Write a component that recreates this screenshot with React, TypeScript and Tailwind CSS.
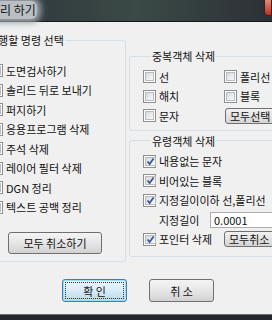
import React from "react";

const font = { fontFamily: '"Noto Sans CJK KR", "Noto Sans", sans-serif' };

const Check = ({ checked }: { checked?: boolean }) => {
    return (
        <span className="w-[13px] h-[13px] shrink-0 border border-[#8e8f8f] bg-white p-[1px] flex">
            <span className="flex-1 flex items-center justify-center border border-[#b8bcc1] bg-gradient-to-br from-[#d6d9dc] to-[#fbfbfb]">
                {checked && (
                    <svg width="9" height="9" viewBox="0 0 9 9">
                        <path d="M1.5 4.5 L3.6 7 L7.6 1.5" fill="none" stroke="#3b5795" strokeWidth="1.8" />
                    </svg>
                )}
            </span>
        </span>
    )
}

interface RowProp {
    label: string,
    checked?: boolean
}

const Row: React.FC<RowProp> = ({ label, checked }) => {
    return (
        <div className="h-[19.5px] flex items-center gap-[3px] whitespace-nowrap">
            <Check checked={checked} />
            <span className="leading-[14px]">{label}</span>
        </div>
    )
}

const SmallButton = ({ label, className }: { label: string, className: string }) => {
    return (
        <div className={"h-[16px] border border-[#707070] rounded-[3px] bg-gradient-to-b from-[#f2f2f2] to-[#d4d4d4] flex items-center pl-[4px] leading-[14px] whitespace-nowrap shrink-0 " + className}>
            {label}
        </div>
    )
}

export default function App() {
    return (
        <div className="w-[272px] h-[320px] overflow-hidden flex flex-col bg-[#f0f0f0] text-[11px] text-[#111]" style={font}>
            {/* title bar */}
            <div className="h-[22px] shrink-0 flex bg-gradient-to-r from-[#2f363c] via-[#3b4a46] to-[#2c3036] border-b border-[#15181b]">
                <div className="h-[18px] mt-[1px] ml-[-12px] px-[1px] rounded-[6px] bg-[#b9bfc4] shadow-[0_0_6px_4px_#9ea5ab] text-[12px] leading-[18px] text-[#151515] whitespace-nowrap">
                    정리 하기
                </div>
                <div className="flex-1" />
                <div className="w-[8px] h-[17px] mt-[-1px] rounded-bl-[4px] border border-[#4a1a14] bg-gradient-to-b from-[#e08a78] to-[#b6321f]" />
            </div>

            <div className="flex-1 flex flex-col">
                <div className="flex items-start">
                    <fieldset className="ml-[-16px] mt-[11px] w-[142px] shrink-0 border border-[#d5dfe5] rounded-[3px] pl-[5px] pt-[14px] pb-[7px]">
                        <legend className="ml-[-3px] px-[1px] leading-[14px] whitespace-nowrap">실행할 명령 선택</legend>
                        <Row label="도면검사하기" />
                        <Row label="솔리드 뒤로 보내기" />
                        <Row label="퍼지하기" />
                        <Row label="응용프로그램 삭제" />
                        <Row label="주석 삭제" />
                        <Row label="레이어 필터 삭제" />
                        <Row label="DGN 정리" />
                        <Row label="텍스트 공백 정리" />
                        <div className="ml-[18px] mt-[15px] w-[94px] h-[22px] border border-[#707070] rounded-[3px] bg-gradient-to-b from-[#f4f4f4] via-[#e6e6e6] to-[#d2d2d2] flex items-center justify-center leading-[14px]">
                            모두 취소하기
                        </div>
                    </fieldset>

                    <div className="ml-[3px] flex flex-col w-[170px] shrink-0">
                        <fieldset className="mt-[27px] border border-[#d5dfe5] rounded-[3px] pl-[13px] pt-[4px] pb-[4px]">
                            <legend className="ml-[8px] px-[1px] leading-[14px] whitespace-nowrap">중복객체 삭제</legend>
                            <div className="grid grid-cols-[81px_1fr]">
                                <Row label="선" />
                                <Row label="폴리선" />
                                <Row label="해치" />
                                <Row label="블록" />
                                <Row label="문자" />
                                <div className="h-[19.5px] flex items-center">
                                    <SmallButton label="모두선택" className="ml-[1px] w-[70px]" />
                                </div>
                            </div>
                        </fieldset>

                        <fieldset className="mt-[3px] border border-[#d5dfe5] rounded-[3px] pl-[13px] pt-[4px] pb-[7px]">
                            <legend className="ml-[8px] px-[1px] leading-[14px] whitespace-nowrap">유령객체 삭제</legend>
                            <Row label="내용없는 문자" checked />
                            <Row label="비어있는 블록" checked />
                            <Row label="지정길이이하 선,폴리선" checked />
                            <div className="h-[19.5px] flex items-center whitespace-nowrap">
                                <span className="ml-[16px] w-[51px] leading-[14px]">지정길이</span>
                                <div className="h-[16px] flex-1 bg-white border border-[#abadb3] flex items-center pl-[3px] leading-[14px]">
                                    0.0001
                                </div>
                            </div>
                            <div className="grid grid-cols-[81px_1fr]">
                                <Row label="포인터 삭제" checked />
                                <div className="h-[19.5px] flex items-center">
                                    <SmallButton label="모두취소" className="w-[70px]" />
                                </div>
                            </div>
                        </fieldset>
                    </div>
                </div>

                <div className="mt-[17px] flex pl-[62px] gap-[22px]">
                    <div className="w-[65px] h-[23px] rounded-[3px] border border-[#3c7fb1] bg-gradient-to-b from-[#eaf6fd] via-[#d9ecf7] to-[#b7d9ee] shadow-[inset_0_0_0_1px_#9fdcfb] p-[2px]">
                        <div className="h-full border border-dotted border-[#333] flex items-center justify-center leading-[14px]">
                            확 인
                        </div>
                    </div>
                    <div className="w-[65px] h-[23px] rounded-[3px] border border-[#707070] bg-gradient-to-b from-[#f4f4f4] via-[#e6e6e6] to-[#d2d2d2] flex items-center justify-center leading-[14px]">
                        취 소
                    </div>
                </div>
            </div>

            <div className="h-[6px] shrink-0 border-t border-[#6b6f73] bg-[#24282c]" />
        </div>
    )
}
